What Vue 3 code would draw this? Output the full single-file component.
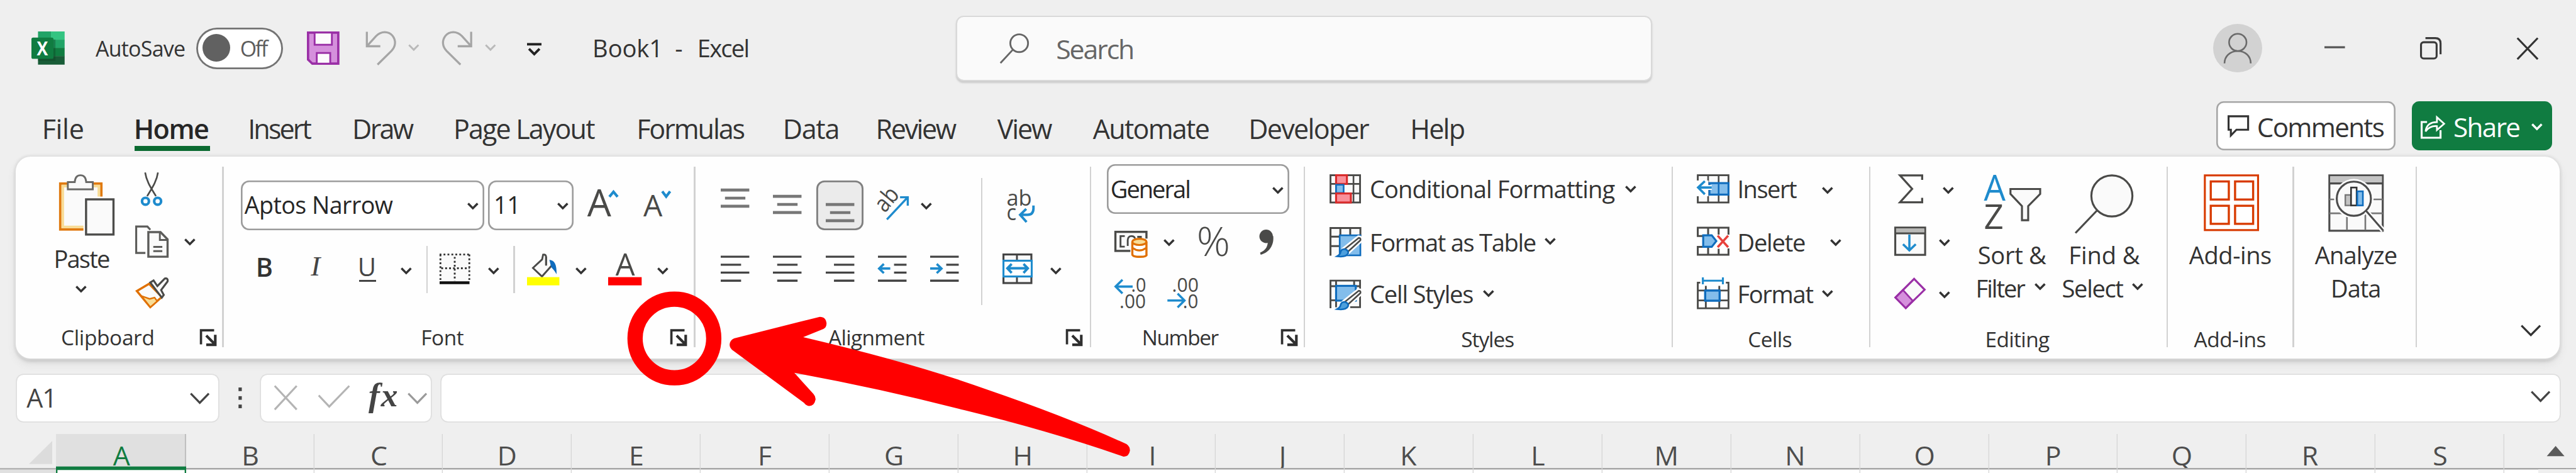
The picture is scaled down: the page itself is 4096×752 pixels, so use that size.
<script setup>
import { h } from 'vue'

const INK = '#333333'
const BLUE = '#1e8bcd'
const GREY = '#4a4a48'
const FAMILY = "'Open Sans', 'Noto Sans', sans-serif"

/* ---------- layout helpers: every node knows its own rectangle ---------- */
const pen = document.createElement('canvas').getContext('2d')
function inkOf(str, size, weight, style, family) {
  pen.font = `${style} ${weight} 100px ${family}`
  const m = pen.measureText(str)
  return { left: (-m.actualBoundingBoxLeft * size) / 100, width: ((m.actualBoundingBoxRight + m.actualBoundingBoxLeft) * size) / 100 }
}
function txt(x, base, w, str, size = 14.8, o = {}) {
  const { weight = 400, style = 'normal', family = FAMILY, color = INK, cls = '' } = o
  const ink = inkOf(str, size, weight, style, family)
  const ls = str.length > 1 ? (w - ink.width) / (str.length - 1) : 0
  return { kind: 'text', x, y: base + 0.3 - 1.088 * size, w, h: 1.4 * size, str, cls,
    css: { fontSize: size + 'px', lineHeight: 1.4 * size + 'px', letterSpacing: ls + 'px', textIndent: -ink.left + 'px', fontWeight: weight, fontStyle: style, fontFamily: family, color } }
}
const ico = (x, y, w, h2, html) => ({ kind: 'icon', x, y, w, h: h2, html })
const box = (cls, x, y, w, h2, ...kids) => ({ kind: 'box', dir: 'row', cls, x, y, w, h: h2, kids })
const vbox = (cls, x, y, w, h2, ...kids) => ({ ...box(cls, x, y, w, h2, ...kids), dir: 'col' })
function wrap(dir, kids) {
  const x = Math.min(...kids.map((k) => k.x))
  const y = Math.min(...kids.map((k) => k.y))
  const w = Math.max(...kids.map((k) => k.x + k.w)) - x
  const hh = Math.max(...kids.map((k) => k.y + k.h)) - y
  return { kind: 'box', dir, cls: '', x, y, w, h: hh, kids }
}
const row = (...kids) => wrap('row', kids)
const col = (...kids) => wrap('col', kids)

const chev = (x, y, c = '#333', w = 6.8, hh = 4.3, s = 1.35) =>
  ico(x, y, w, hh, `<path d="M${x + 0.5} ${y + 0.6}L${x + w / 2} ${y + hh - 0.8}L${x + w - 0.5} ${y + 0.6}" fill="none" stroke="${c}" stroke-width="${s}"/>`)
const sep = (x, y = 101.4, hh = 109.8) => box('sep', x - 0.4, y, 0.8, hh)

/* ---------- svg snippets ---------- */
const L = (d, c = GREY, s = 1.2, f = 'none', extra = '') => `<path d="${d}" fill="${f}" stroke="${c}" stroke-width="${s}" ${extra}/>`
const R = (x, y, w, hh, f, c = 'none', s = 0, extra = '') => `<rect x="${x}" y="${y}" width="${w}" height="${hh}" fill="${f}" stroke="${c}" stroke-width="${s}" ${extra}/>`
const T = (x, y, size, str, c = INK, w = 0, extra = '') =>
  `<text x="${x}" y="${y}" font-family="${FAMILY}" font-size="${size}" fill="${c}" ${w ? `textLength="${w}" lengthAdjust="spacingAndGlyphs"` : ''} ${extra}>${str}</text>`

const launcher = (x) =>
  ico(x, 200.4, 10.2, 10.6, L(`M${x + 0.6} 209.8V201.2H${x + 8.6}`, '#2f2f2f', 1.4) + L(`M${x + 3.8} 204.4L${x + 8.6} 209.2M${x + 9.3} 203.9V210H${x + 3.8}`, '#2f2f2f', 1.6))
const lines = (x, ys, spans, c = '#444', s = 1.3) =>
  ico(x, ys[0] - 0.8, 17.4, ys[ys.length - 1] - ys[0] + 1.6, ys.map((y, i) => L(`M${x + spans[i][0]} ${y}H${x + spans[i][1]}`, c, s)).join(''))

/* ---------- title bar ---------- */
const excel = ico(19.3, 19.3, 20.2, 20.2,
  R(23.3, 19.3, 8.1, 5.1, '#21a366') + R(31.2, 19.3, 8.3, 5.1, '#33c481') + R(23.3, 24.3, 8.1, 5.1, '#107c41') + R(31.2, 24.3, 8.3, 5.1, '#21a366') +
  R(23.3, 29.3, 8.1, 5.1, '#185c37') + R(31.2, 29.3, 8.3, 5.1, '#107c41') + R(23.3, 34.3, 16.2, 5.2, '#185c37') +
  R(23.3, 24.2, 10.6, 13, '#0b3d20', 'none', 0, 'opacity=".35"') + R(19.3, 23, 13.4, 13, '#107c41', 'none', 0, 'rx="1"') + T(22.6, 33.7, 11.5, 'X', '#fff', 6.8, 'font-weight="700"'))
const save = ico(186.9, 19.3, 19.8, 20.2,
  L('M187.6 20H206V38.9H190.2L187.6 36.4Z', '#9a2fa6', 1.4, '#d590dc') + R(191.6, 20, 10.5, 7.4, '#fdfbfd', '#9a2fa6', 1.1) + R(192.9, 32.4, 8.2, 6.5, '#fdfbfd', '#9a2fa6', 1.1))
const undo = ico(222.9, 19, 18.1, 20.3, L('M223.4 19.2V28H231.6M223.8 27.6L229 21.8C232.2 18.6 236.6 18.8 239 21.6C241.4 24.6 240.9 28.2 238.4 30.8L229.9 39.2', '#a5a5a5', 1.25))
const redo = ico(269.7, 19, 17.6, 20.3, L('M287 19.2V28H278.8M286.6 27.6L281.4 21.8C278.2 18.6 273.8 18.8 271.4 21.6C269 24.6 269.5 28.2 272 30.8L280.5 39.2', '#a5a5a5', 1.25))
const qat = ico(320.8, 26, 8.8, 8, L('M320.8 26.9H329.6', '#222', 1.5) + L('M322 29.7L325.2 32.9L328.4 29.7', '#222', 1.5))

const titlebar = box('', 0, 0, 1568, 54,
  excel,
  txt(58.2, 34.6, 54.1, 'AutoSave', 13),
  box('toggle', 119.5, 16.8, 52.8, 25.4, box('knob', 123.4, 20.5, 16.9, 16.9), txt(146.9, 34.6, 17, 'Off', 13, { color: '#5c5c5c' })),
  save, undo, chev(248.4, 26.9, '#b9b9b9', 6.8, 4.3, 1.1), redo, chev(295, 26.9, '#b9b9b9', 6.8, 4.3, 1.1), qat,
  txt(362, 34.8, 38.5, 'Book1', 14.6), txt(411.5, 34.8, 4.4, '-', 14.6), txt(425.8, 34.8, 29.4, 'Excel', 14.6),
  box('search', 582.8, 10.3, 422.2, 38.4,
    ico(608.6, 20.3, 17.6, 18.4, `<circle cx="620.3" cy="26.3" r="5.4" fill="none" stroke="#666" stroke-width="1.1"/>` + L('M616.4 30.3L608.9 38.4', '#666', 1.1)),
    txt(643.7, 36.1, 45.9, 'Search', 16.4, { color: '#666' })),
  box('avatar', 1347.3, 14.5, 29.6, 29.6,
    ico(1353.6, 20.3, 16.6, 18.5, `<ellipse cx="1362.1" cy="25.8" rx="5.3" ry="5.2" fill="none" stroke="#6a6a6a" stroke-width="1"/>` + L('M1354 38.6C1354 34.2 1357.4 31.1 1362.1 31.1S1370 34.2 1370 38.6', '#6a6a6a', 1))),
  ico(1414.8, 28, 12.5, 1.6, L('M1414.8 28.8H1427.3', '#555', 1.3)),
  ico(1473.3, 22.6, 13, 13.7, R(1473.9, 25.7, 9.5, 9.9, 'none', '#3a3a3a', 1.2, 'rx="1.6"') + L('M1476.6 23.2H1482.6Q1485.8 23.2 1485.8 26.4V33', '#3a3a3a', 1.2)),
  ico(1532, 22.9, 12.8, 13.2, L('M1532.3 23.1L1544.7 36M1544.7 23.1L1532.3 36', '#333', 1.2)))

/* ---------- ribbon tabs ---------- */
const tab = (x, w, s) => txt(x, 84.5, w, s, 16.5)
const tabs = box('', 0, 54, 1568, 41.3,
  tab(27, 23.4, 'File'),
  col(txt(82.9, 84.5, 43.8, 'Home', 16.5, { weight: 600, color: '#262626' }), box('underline', 81.9, 88.9, 46.1, 2.8)),
  tab(152.4, 37.2, 'Insert'), tab(215.9, 36, 'Draw'), tab(277.5, 84.6, 'Page Layout'), tab(389, 64.1, 'Formulas'), tab(478, 32, 'Data'),
  tab(534.6, 47.7, 'Review'), tab(607.1, 33.5, 'View'), tab(665.3, 70.4, 'Automate'), tab(761.5, 72.1, 'Developer'), tab(859.9, 31.3, 'Help'),
  box('comments', 1349, 61.5, 109.3, 30.1,
    ico(1355.9, 69.9, 13.1, 13.4, L('M1356.5 70.6H1368.4V78.8H1361.3L1357.9 82.3V78.8H1356.5Z', '#333', 1.2)),
    txt(1374.9, 83.1, 76.2, 'Comments', 16.2)),
  box('share', 1468, 61.5, 85.6, 30.1,
    ico(1473.7, 70.1, 14.6, 14.4, L('M1477.6 74.3H1474.3V83.9H1485.8V79.3', '#fff', 1.2) + L('M1476.7 80C1477.2 76.2 1479.6 74.4 1483.6 74.4V71.4L1488 75.4L1483.6 79.2V76.8C1480.6 76.6 1478.4 77.6 1476.7 80Z', '#fff', 1.05)),
    txt(1494.3, 83.1, 39.3, 'Share', 16.2, { color: '#fff', weight: 500 }), chev(1541.1, 75, '#fff')))

/* ---------- clipboard ---------- */
const pasteIcon = ico(36.1, 106, 33.7, 37.3,
  R(36.8, 111.7, 25, 27.9, '#fafafa', '#e07a10', 1.5) + R(38.3, 113.2, 22, 24.9, 'none', '#f8dc96', 1.6) +
  L('M41.4 110.8H45.6C45.8 108 47.2 106.6 49.1 106.6S52.4 108 52.6 110.8H56.6V115.2H41.4Z', '#6a6a68', 1.1, '#fafafa') +
  R(50.9, 119.6, 20, 25, '#fff') + R(52.5, 121.3, 16.7, 21.4, '#fafafa', '#4c4c4a', 1.3))
const cut = ico(85.8, 104.9, 13.1, 20.5,
  L('M88.4 105C89.2 110.5 92 114.5 95 119.4M96.2 105C95.4 110.5 92.6 114.5 89.6 119.4', '#4a4a48', 1) +
  `<g fill="none" stroke="#1e8bcd" stroke-width="1.6"><circle cx="88.6" cy="122.5" r="2.1"/><circle cx="96" cy="122.5" r="2.1"/></g>`)
const copyIcon = ico(82.2, 137, 20.3, 19.8,
  L('M88.4 153.9H82.8V137.8H89.6L91.4 139.8', '#5c5c5a', 1.2) + L('M90.2 141.2H97.6L101.9 145.6V156.2H90.2Z', '#5c5c5a', 1.3, '#fafafa') + L('M97.2 141.4V146H101.7M93.2 150.2H98.7M93.2 152.8H98.7', '#5c5c5a', 1.1))
const brush = ico(82.6, 168.9, 19.9, 18.7,
  L('M90.6 172.8L83.2 177.2L91.4 187L98.4 180.8Z', '#e07000', 1.3, '#fafafa') + L('M86 180.2L91 182L94 181.2L95.6 183.4L91.4 187Z', '#e07000', 0.9, '#f8dc96') +
  L('M91.4 172L93.4 170.8L95.7 174.2L100.2 169.6Q102.4 169.2 101.9 171.4L98 176.6L99.6 179.6L98.4 181.2Z', '#4a4a48', 1.2, '#fafafa'))
const GL = (x, w, s, base = 210) => txt(x, base, w, s, 12.8)

const clipboard = vbox('group', 9.5, 95.3, 126.2, 123,
  row(col(pasteIcon, txt(34, 162.9, 32.4, 'Paste', 14.6), chev(45.8, 173.7)), col(cut, row(copyIcon, chev(112, 145.2)), brush)),
  row(GL(37.9, 55.2, 'Clipboard'), launcher(121.7)))

/* ---------- font ---------- */
const growA = ico(357.9, 114.7, 18.6, 16.8, T(357.4, 131.4, 23.4, 'A', GREY, 14.6) + L('M370.9 119.6L373.4 116.6L375.9 119.6', BLUE, 1.6))
const shrinkA = ico(392, 114.7, 16.6, 16.8, T(391.6, 131.4, 18, 'A', GREY, 11.6) + L('M403.1 116.3L405.5 119.5L407.9 116.3', BLUE, 1.6))
const borders = ico(267.8, 154.4, 18.9, 18.7,
  R(268, 155, 18.2, 17, '#fafafa') + L('M267.8 155H286.6M268.3 155V171M285.9 155V171M277 156.5V171M268.8 163.4H286', '#333', 1.1, 'none', 'stroke-dasharray="1.1 1.3"') + L('M267.8 172.2H286', '#111', 1.7))
const fill = ico(320.8, 154.4, 19.7, 19.4,
  L('M332.4 161.5V156.4Q332.2 154.8 330.6 155.1L330 158L324.4 163.2L329.9 168.4L335.8 161.8', GREY, 1.1, '#fafafa') + L('M332.4 161.8V156.4', GREY, 1.1) +
  `<path d="M334.4 158.2C337.6 158.6 338.9 161 338.8 167C337.4 164.4 335.8 163.2 335.4 162.4Z" fill="#0f6cbd"/>` + R(320.8, 168.8, 19.7, 5, '#ffff00'))
const fontColor = ico(370.3, 154.4, 20.4, 19.4, T(374.8, 167.7, 18.6, 'A', GREY, 11.8) + R(370.3, 168.8, 20.4, 5, '#ff0000'))

const font = vbox('group', 135.7, 95.3, 287.1, 123,
  row(box('field', 146.5, 109.8, 148.4, 30.2, txt(148.8, 130.4, 90.4, 'Aptos Narrow', 14.4, { color: '#262626' }), chev(284.4, 123.2)),
    box('field', 297.1, 109.8, 52.2, 30.2, txt(301.8, 130.4, 12, '11', 14.4, { color: '#262626' }), chev(339, 123.2)),
    growA, shrinkA),
  row(txt(157.1, 168.6, 8.6, 'B', 15.8, { weight: 600 }),
    txt(189, 168.4, 7.6, 'I', 17.2, { style: 'italic', family: "'Liberation Serif', serif", color: '#444' }),
    col(txt(219.1, 168.1, 9.2, 'U', 15.4, { color: '#444' }), box('uline', 218.6, 170.3, 10.4, 1.2)), chev(244, 162.6),
    sep(259.9, 149.7, 28.8), borders, chev(297.1, 162.6), sep(313, 149.7, 28.8), fill, chev(350.2, 162.6), fontColor, chev(400.1, 162.6)),
  row(GL(257.3, 24.9, 'Font'), launcher(408.1)))

/* ---------- alignment ---------- */
const wide = [0, 17.4], mid = [2.6, 15]
const V = (x, y) => lines(x, [y, y + 4.95, y + 9.9], [wide, mid, wide], '#777', 1.8)
const Hh = (x, s) => lines(x, [156.2, 161.1, 165.9, 170.8], [wide, s, wide, s])
const arrowLeft = (x) => L(`M${x + 0.6} 163.4H${x + 7.5}M${x + 3.6} 160.6L${x + 0.7} 163.4L${x + 3.6} 166.2`, BLUE, 1.4)
const arrowRight = (x) => L(`M${x} 163.4H${x + 7}M${x + 4} 160.6L${x + 6.9} 163.4L${x + 4} 166.2`, BLUE, 1.4)
const dent = (x, arrow) => ico(x, 155.4, 17.4, 16.2, L(`M${x} 156.2H${x + 17.4}M${x + 9.8} 161.1H${x + 17.4}M${x + 9.8} 165.9H${x + 17.4}M${x} 170.8H${x + 17.4}`, '#444', 1.3) + arrow(x))
const orient = ico(533.2, 114.7, 19.8, 19,
  `<g transform="translate(538.6 129.8) rotate(-50)">${T(0, 0, 14.4, 'ab', GREY, 14.6)}</g>` + L('M539.8 133.4L552.2 120.2M547.8 119.9H552.5V125', BLUE, 1.3))
const wrapText = ico(613.2, 114.7, 16.8, 21.4, T(612.6, 125.2, 13.6, 'ab', GREY, 15.4) + T(612.6, 133.9, 13.6, 'c', GREY, 6) + L('M629 124.9V127Q628.8 130.6 625.4 130.6H621.4M624.6 127L620.9 130.6L624.8 135', BLUE, 1.5))
const merge = ico(610.4, 154.4, 18.2, 18.7,
  R(611, 155, 17, 17.4, '#fafafa', '#444', 1.2) + L('M619.2 155V159M619.2 168.4V172.4', '#444', 1.1) + R(611, 158.8, 17.2, 9.6, '#fff', BLUE, 1.2) + L('M613.4 163.4H625.8M616 160.8L613.4 163.4L616 166.2M623.2 160.8L625.8 163.4L623.2 166.2', BLUE, 1.5))

const alignment = vbox('group', 422.8, 95.3, 241.1, 123,
  row(
    col(row(V(438.8, 115.8), V(470.6, 119.4), box('pressed', 496.8, 109.8, 28.8, 30.2, V(502.5, 124.3)), orient, chev(560.3, 123.2)),
      row(Hh(438.8, [0, 12.4]), Hh(470.6, mid), Hh(502.5, [5, 17.4]), dent(534.4, arrowLeft), dent(566.2, arrowRight))),
    sep(597.6, 108.5, 77.2),
    col(wrapText, row(merge, chev(639.3, 162.6)))),
  row(GL(504.2, 58.5, 'Alignment'), launcher(648.9)))

/* ---------- number ---------- */
const money = ico(678.5, 140.2, 20, 16.8,
  R(679.1, 141.2, 18.9, 11.6, '#fafafa', GREY, 1.3) + L('M684.8 143.8H682.2V150.2H684.8M686.6 149.8V146.2Q686.8 143.8 688.8 143.8T691 145.4M692.4 144.2H694.6V146', GREY, 1.1) +
  R(688.2, 145.3, 10.8, 13, '#fff') + L('M689.4 147.4V154.8Q689.4 156.4 694 156.4T698 154.8V147.4', '#e07000', 1.3, '#fff') + `<ellipse cx="693.7" cy="147.3" rx="4.3" ry="1.9" fill="#f8dc96" stroke="#e07000" stroke-width="1.2"/>` + L('M689.6 151Q693.7 154 697.8 151', '#e07000', 1.2))
const percent = ico(729.1, 137.7, 18.6, 18.4, T(728.2, 155.8, 24.6, '%', GREY, 20.4, 'font-weight="300"'))
const comma = ico(766.3, 139.6, 9, 15, `<circle cx="770.6" cy="143.7" r="4.1" fill="${GREY}"/><path d="M774.9 143.4C775.6 149 772.4 153.6 767.3 154.9L766.9 153.7C770.6 152 771.8 149.6 771.6 146Z" fill="${GREY}"/>`)
const inc = ico(678.5, 168.8, 18.8, 19.2, T(688.6, 177.5, 11.9, '.0', GREY, 9.2) + T(681.6, 187.4, 11.9, '.00', GREY, 16) + L('M679.1 174.4H689.6M683.4 170.2L679.2 174.4L683.4 178.6', BLUE, 1.35))
const dec = ico(710.5, 168.8, 18.9, 19.2, T(713.4, 177.5, 11.9, '.00', GREY, 16.2) + T(720, 187.4, 11.9, '.0', GREY, 9.4) + L('M710.6 182.9H720.8M716.8 178.7L721 182.9L716.8 187.1', BLUE, 1.35))

const number = vbox('group', 663.9, 95.3, 130.2, 123,
  box('field', 673.7, 100.1, 111.2, 30.2, txt(676.8, 120.5, 47, 'General', 14.6, { color: '#262626' }), chev(774.3, 113.6)),
  row(money, chev(708.1, 145.4), percent, comma),
  row(inc, dec),
  row(GL(696.2, 45.7, 'Number'), launcher(779.8)))

/* ---------- styles ---------- */
const RED = '#d92b2b', RF = '#f9909a', DB = '#0f6cbd', LB = '#83bdeb'
const condIcon = ico(809.4, 106.2, 19.2, 17.8,
  R(810, 106.8, 18, 16.6, '#fafafa', GREY, 1.1) + L('M810 112.1H828M810 117.9H828M813.4 107V123.4M824 107V123.4', GREY, 1) +
  R(813.4, 106.8, 6.6, 5.3, RF, RED, 1.2) + R(813.4, 112.6, 4.6, 5, LB, DB, 1) + R(813.4, 117.9, 9, 5.5, RF, RED, 1.2))
const pencilShape = (y) => `M827.2 ${y + 6.6}Q828.6 ${y + 6.6} 828.2 ${y + 8}L820.6 ${y + 15}L818.9 ${y + 13.2}Z`
const pencil = (y) => L(pencilShape(y), '#fff', 3, '#fff') + L(pencilShape(y), GREY, 1, '#fafafa') +
  L(`M818.6 ${y + 13.4}Q820.8 ${y + 13.8} 820.8 ${y + 15.8}Q819.6 ${y + 18.6} 814 ${y + 17.8}Q816 ${y + 16.8} 816.2 ${y + 15}Q816.8 ${y + 13.4} 818.6 ${y + 13.4}Z`, DB, 1, '#4d9fdc')
const tableIcon = ico(809.4, 138, 19.2, 18.8,
  R(810, 138.6, 18, 17, '#fafafa') + L('M810 155.8V139H828.2V144M810 144.2H828M810 150H816M816 139V150M822 139V144', GREY, 1.15) + R(815.6, 143.4, 12.6, 12.2, LB, DB, 1) + pencil(138.4))
const cellIcon = ico(809.4, 170, 19.2, 18.8,
  R(810, 170.6, 18, 17, '#fafafa') + L('M810 187.6V170.8H828V187H822M810 174.2H828M810 182.8H814M813.4 171V187M824.4 171V175', GREY, 1.1) + R(813.4, 174, 12, 9, LB, DB, 1.2) + pencil(170.4))
const styles = vbox('group', 794.1, 95.3, 223.8, 123,
  row(condIcon, txt(834.6, 120.5, 148.4, 'Conditional Formatting', 14.6), chev(989.2, 112.9)),
  row(tableIcon, txt(835, 153, 99.6, 'Format as Table', 14.6), chev(940.2, 144.7)),
  row(cellIcon, txt(834.6, 184.5, 62, 'Cell Styles', 14.6), chev(902.5, 176.5)),
  GL(890, 31.4, 'Styles', 211))

/* ---------- cells ---------- */
const insArrow = 'M1033.6 114.3H1042M1037.8 110.4L1033.7 114.3L1037.8 118.4'
const insIcon = ico(1032.9, 106.2, 19.9, 17.8,
  R(1033.5, 106.8, 18.7, 16.6, '#fafafa', GREY, 1.1) + L('M1039.8 107V123.4M1046.2 107V123.4', GREY, 1) + R(1032, 110, 8, 9.6, '#fff') +
  R(1040.6, 111.6, 11.6, 7, LB, DB, 1.2) + L('M1046.2 112V118.6', DB, 1) + L(insArrow, '#fff', 3) + L(insArrow, BLUE, 1.4))
const delIcon = ico(1032.9, 138, 19.9, 17.8,
  L('M1036.4 143.8H1033.5V138.8H1052.2V143M1036.4 150.4H1033.5V155.2H1052.2V151.4M1039.8 139V155M1046.2 139V143M1046.2 151.6V155', GREY, 1.15) +
  L('M1036.8 143.4H1042L1044.8 146.9L1042 150.4H1036.8Z', DB, 1.2, LB) + L('M1045.6 143.6L1052 150.6M1052 143.6L1045.6 150.6', '#e8413b', 1.4))
const fmtIcon = ico(1032.9, 168.8, 19.9, 19.6,
  L('M1035 172H1033.5V187.6H1052.2V172H1050.6M1033.5 176.8H1052M1033.5 182.8H1052M1038.4 174V187.4M1046.6 174V187.4', GREY, 1.1) + R(1038, 176.8, 8.8, 6.2, LB, DB, 1.3) +
  L('M1036.6 168.8V173M1048.8 168.8V173M1036.6 170.8H1048.8', BLUE, 1.2))
const cells = vbox('group', 1017.9, 95.3, 120.1, 123,
  row(insIcon, txt(1058.8, 120.5, 34.9, 'Insert', 14.6), chev(1108.9, 113.6)),
  row(delIcon, txt(1058.8, 153, 39.7, 'Delete', 14.6), chev(1114, 145.4)),
  row(fmtIcon, txt(1058.8, 184.5, 45, 'Format', 14.6), chev(1108.9, 176.5)),
  GL(1064.7, 25.7, 'Cells', 211))

/* ---------- editing ---------- */
const sigma = ico(1155.6, 106.2, 14.8, 17.8, L('M1169.9 109.6V106.9H1156.4L1163.8 115.1L1156.4 123.3H1169.9V120.6', GREY, 1.25))
const fillDown = ico(1153.1, 138, 19.4, 17.8, R(1153.7, 138.7, 18.2, 16.6, '#fafafa', GREY, 1.2) + R(1154.2, 139.2, 17.2, 2.6, '#b8b8b6') + L('M1153.7 142.2H1171.9', GREY, 1.1) + L('M1162.3 143V152.4M1158.4 148.8L1162.3 152.6L1166.2 148.8', BLUE, 1.35))
const eraser = ico(1153.1, 168.9, 19.1, 19.6, L('M1165.2 169.8L1171.6 176.4L1160.1 187.6L1153.8 181.2Z', '#9a2fa6', 1.2, '#fafafa') + L('M1158.4 176.6L1164.4 183.2L1160.1 187.6L1153.8 181.2Z', '#9a2fa6', 1.1, '#d590dc'))
const sortIcon = ico(1208, 106.6, 34.4, 33.4,
  T(1207.4, 122.3, 21.6, 'A', BLUE, 13.2) + T(1207.4, 139.7, 21.2, 'Z', GREY, 12) + L('M1223.6 115.2H1241.7V118.2L1234.4 125.6V134.2H1230.6V125.6L1223.6 118.2Z', GREY, 1.2, '#fafafa'))
const findIcon = ico(1263, 106, 36, 36.4, `<circle cx="1285.6" cy="119.2" r="12.5" fill="#fafafa" stroke="${GREY}" stroke-width="1.2"/>` + L('M1276.6 128L1263.4 141.8', GREY, 1.2))
const editing = vbox('group', 1138, 95.3, 181, 123,
  row(col(row(sigma, chev(1182.4, 113.6)), row(fillDown, chev(1180.1, 145.4)), row(eraser, chev(1180.1, 177.2))),
    col(sortIcon, txt(1204.6, 160.7, 41, 'Sort &', 14.6), row(txt(1203.9, 180.9, 29, 'Filter', 14.6), chev(1238.4, 172.4))),
    col(findIcon, txt(1260.5, 160.7, 42.1, 'Find &', 14.6), row(txt(1255.8, 180.9, 36.7, 'Select', 14.6), chev(1297.9, 172.4)))),
  GL(1209.5, 38, 'Editing', 211))

/* ---------- add-ins, analyze ---------- */
const OR = '#d83b01'
const addIcon = ico(1341.3, 106, 33.7, 34.8,
  R(1342, 106.7, 32.4, 33.3, '#fff', OR, 1.2) + [[1345.6, 110.4], [1360.4, 110.4], [1345.6, 125.2], [1360.4, 125.2]].map(([x, y]) => R(x, y, 11, 11, '#fff', OR, 1.3)).join(''))
const addins = vbox('group', 1319, 95.3, 76.9, 123, addIcon, txt(1332.5, 160.7, 49.8, 'Add-ins', 14.6), GL(1335.4, 43.6, 'Add-ins', 211))
const analyzeIcon = ico(1417.2, 106, 33.9, 35.2,
  R(1417.9, 106.7, 32.5, 33.7, '#fafafa', '#4c4c4c', 1.2) + R(1418.4, 107.2, 31.5, 4, '#c4c4c4') + L('M1417.9 111.6H1450.4', '#4c4c4c', 1.3) + L('M1417.9 121.3H1450.4M1417.9 129.8H1450.4M1428.6 130V140M1439.8 130V140', '#777', 1) +
  `<circle cx="1432.8" cy="120.9" r="12" fill="#fff"/><circle cx="1432.8" cy="120.9" r="10.4" fill="#fafafa" stroke="#4c4c4c" stroke-width="1.2"/>` +
  L('M1440.4 128.6L1450.6 140.2', '#fff', 3) + L('M1440.2 128.2L1450.6 140.2', '#4c4c4c', 1.2) +
  R(1427.6, 118.6, 3.4, 6.4, '#c4c4c4', '#777', 0.9) + R(1431.1, 114.1, 3.4, 10.9, '#fff', '#333', 1) + R(1434.9, 116.4, 3.4, 8.6, LB, DB, 1))
const analyze = vbox('group', 1395.9, 95.3, 75, 123, analyzeIcon, txt(1409, 160.7, 49.6, 'Analyze', 14.6), txt(1420, 180.9, 28.4, 'Data', 14.6))

const groups = [clipboard, sep(135.7), font, sep(422.8), alignment, sep(663.9), number, sep(794.1), styles, sep(1017.9), cells, sep(1138), editing, sep(1319), addins, sep(1395.9), analyze, sep(1470.9)]
const ribbon = box('ribbon', 9.5, 95.3, 1548.7, 123.1, ...groups, chev(1534.4, 197.7, '#333', 12.4, 7.2, 1.25))

/* ---------- formula bar ---------- */
const formula = box('', 0, 228.3, 1568, 28.3,
  box('bar', 10.3, 228.3, 122.6, 28.2, txt(16.2, 248.3, 15.2, 'A1', 15.8, { color: '#444' }), chev(115.8, 239, '#444', 12, 7.1, 1.25)),
  ico(145, 235.4, 2.4, 13.4, [236.9, 242.2, 247.3].map((y) => R(145.1, y - 1.1, 2, 2.2, '#444')).join('')),
  box('bar', 158.8, 228.3, 103.4, 28.2,
    ico(167, 234.8, 14, 14.8, L('M167.3 235L180.7 249.4M180.7 235L167.3 249.4', '#b4b4b4', 1.2)),
    ico(193.7, 234.8, 19.1, 13.6, L('M194 240.8L200.4 247.6L212.6 235', '#b4b4b4', 1.2)),
    txt(224.4, 248.4, 17.4, 'fx', 20.5, { style: 'italic', weight: 700, family: "'Liberation Serif', serif", color: '#444' }),
    chev(248.2, 239, '#9a9a9a', 12, 7.1, 1.2)),
  box('bar', 268.9, 228.3, 1289.3, 28.2, chev(1540.4, 237.6, '#444', 12, 7.1, 1.25)))

/* ---------- sheet ---------- */
const PITCH = 78.42
const START = 34.4
const letters = 'ABCDEFGHIJKLMNOPQRS'.split('')
const half = { A: 5.3, B: 4, C: 4.5, D: 5.2, E: 3.5, F: 3.4, G: 5.4, H: 5, I: 0.8, J: 2.8, K: 4.6, L: 3.4, M: 6.6, N: 5.5, O: 5.9, P: 4.1, Q: 6, R: 4.7, S: 4 }
/* the selected column reaches over both of its borders */
const span = (i) => {
  const left = i === 0 ? START - 0.5 : START + i * PITCH + (i === 1 ? 0.5 : 0)
  const right = START + (i + 1) * PITCH + (i === 0 ? 0.5 : 0)
  return [left, right - left]
}
const heads = letters.map((c, i) => {
  const [x, w] = span(i)
  return box(i ? 'head' : 'head active', x, 264.1, w, 20.6, txt(START + (i + 0.5) * PITCH + 0.5 - half[c], 283.2, half[c] * 2, c, 16.4, { color: i ? '#4d4d4d' : '#107c41' }))
})
const header = box('', 0, 264.1, 1568, 20.6,
  ico(17.6, 268.2, 14.2, 14.1, `<path d="M31.8 268.2V282.3H17.6Z" fill="#dcdcdc"/>`), ...heads,
  ico(1550, 271, 11, 7, `<path d="M1555.6 271.4L1561 277.6H1550.2Z" fill="#5a5a5a"/>`))
const cellsRow = box('cells', 0, 284.7, 1568, 3.4,
  box('rowhead', 0, 284.7, 33.9, 3.4),
  ...letters.map((c, i) => box(i ? 'cell' : 'cell picked', span(i)[0], 284.7, span(i)[1], 3.4)),
  box('gutter', 1545, 285.7, 23, 2.4))

const page = vbox('', 0, 0, 1568, 288, titlebar, tabs, ribbon, formula, header, cellsRow)

/* ---------- renderer ---------- */
const px = (n) => Math.round(n * 1000) / 1000 + 'px'
function paint(n, off = {}) {
  const css = { width: px(n.w), height: px(n.h), ...off }
  if (n.kind === 'text') return h('span', { class: ['node', 'label', n.cls], style: { ...css, ...n.css } }, n.str)
  if (n.kind === 'icon') return h('svg', { class: 'node icon', style: off, width: n.w, height: n.h, viewBox: `${n.x} ${n.y} ${n.w} ${n.h}`, innerHTML: n.html })
  let at = n.dir === 'row' ? n.x : n.y
  const kids = n.kids.map((k) => {
    const gap = (n.dir === 'row' ? k.x : k.y) - at
    at = n.dir === 'row' ? k.x + k.w : k.y + k.h
    return n.dir === 'row'
      ? paint(k, { marginLeft: px(gap), marginTop: px(k.y - n.y) })
      : paint(k, { marginTop: px(gap), marginLeft: px(k.x - n.x) })
  })
  return h('div', { class: ['node', n.dir, n.cls], style: css }, kids)
}
const Surface = () => paint(page)
</script>

<template>
  <main class="window">
    <Surface />
    <svg class="callout" width="1568" height="288" viewBox="0 0 1568 288">
      <circle cx="410.5" cy="206" r="23.95" fill="none" stroke="#f00" stroke-width="9.3" />
      <path
        fill="#f00"
        d="M444.1 209.9Q444.2 207.2 446.8 206L498.6 192.9Q502.6 192.6 503.1 196.6Q503.2 199.2 501.2 200.2L488.9 205.2Q558 221.5 601 237.2Q650 254 685.7 270.3Q687.8 271.8 687.8 274.2Q687.2 278 683.9 277.9Q640 262.6 586.9 249.6Q535 236.3 483.5 226.9L495.2 239.8Q496.6 241.4 496.4 243.3Q495.6 247.2 492.4 247.1Q490.8 247 489.4 245.2L446.3 213.4Q444.2 212.1 444.1 209.9Z"
      />
    </svg>
  </main>
</template>

<style>
html,
body {
  margin: 0;
  background: #efefef;
  overflow: hidden;
}
</style>

<style scoped>
.window {
  position: relative;
  width: 1568px;
  height: 287.9px;
  zoom: 2.612245;
  overflow: hidden;
  background: #efefef;
  font-family: 'Open Sans', 'Noto Sans', sans-serif;
}
.callout {
  position: absolute;
  left: 0;
  top: 0;
}
.window :deep(.node) {
  flex: none;
  display: block;
  box-sizing: border-box;
}
.window :deep(.row) {
  display: flex;
  flex-direction: row;
  align-items: flex-start;
}
.window :deep(.col) {
  display: flex;
  flex-direction: column;
  align-items: flex-start;
}
.window :deep(.label) {
  white-space: pre;
}
.window :deep(.icon) {
  overflow: visible;
}
.window :deep(.sep) {
  background: #d2d2d2;
}
.window :deep(.toggle) {
  background: #fff;
  border-radius: 13px;
  box-shadow: inset 0 0 0 1.1px #737373;
}
.window :deep(.knob) {
  background: #616161;
  border-radius: 50%;
}
.window :deep(.search) {
  background: #fafafa;
  border-radius: 4px;
  box-shadow: 0 0 0 0.8px #d9d9d9, 0 1.2px 1px 0.6px #cccccc;
}
.window :deep(.avatar) {
  background: #d2d2d2;
  border-radius: 50%;
}
.window :deep(.underline) {
  background: #0b6a31;
}
.window :deep(.comments) {
  background: #fff;
  border-radius: 4.5px;
  box-shadow: inset 0 0 0 1px #a6a6a6;
}
.window :deep(.share) {
  background: #107c41;
  border-radius: 4.5px;
}
.window :deep(.ribbon) {
  background: #fefefe;
  border-radius: 9px;
  box-shadow: 0 0 1.5px 0.4px #dedede, 0 1.4px 2px 0 #bdbdbd, 0 3px 5px 0 #dcdcdc;
}
.window :deep(.field) {
  background: #fff;
  border-radius: 5px;
  box-shadow: inset 0 0 0 1px #9c9c9c;
}
.window :deep(.pressed) {
  background: #ebebeb;
  border-radius: 5px;
  box-shadow: inset 0 0 0 1.1px #808080;
}
.window :deep(.uline) {
  background: #444;
}
.window :deep(.bar) {
  background: #fff;
  border-radius: 4px;
  box-shadow: 0 0 0 0.7px #dfdfdf;
}
.window :deep(.head) {
  box-shadow: inset -0.5px 0 0 #d6d6d6;
}
.window :deep(.head.active) {
  background: #e0e0e0;
  box-shadow: inset -0.8px 0 0 #c0c0c0;
}
.window :deep(.cells) {
  background: #fff;
  box-shadow: inset 0 1px 0 #a6a6a6;
}
.window :deep(.rowhead) {
  background: #e0e0e0;
  box-shadow: inset 0 1px 0 #b4b4b4;
}
.window :deep(.cell) {
  box-shadow: inset -0.5px 0 0 #d6d6d6;
}
.window :deep(.cell.picked) {
  box-shadow: inset 0.9px 0 0 #107c41, inset -0.9px 0 0 #107c41, inset 0 1.2px 0 #107c41, 0 -0.9px 0 #107c41;
}
.window :deep(.gutter) {
  background: #efefef;
}
</style>
